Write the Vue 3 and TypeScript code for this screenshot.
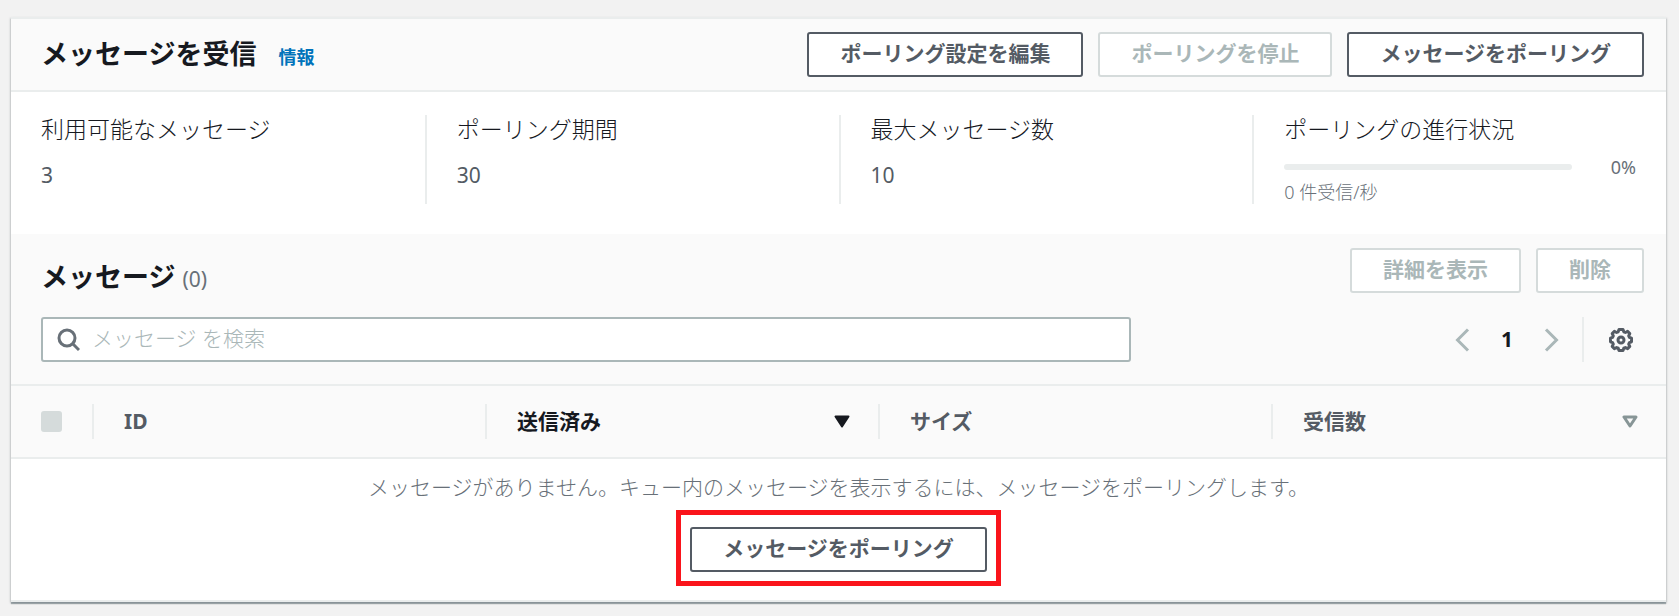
<script setup lang="ts">
import { ref } from 'vue'

interface Metric {
  label: string
  value: string
}

interface Column {
  label: string
  sort: 'none' | 'active' | 'available'
}

const metrics: Metric[] = [
  { label: '利用可能なメッセージ', value: '3' },
  { label: 'ポーリング期間', value: '30' },
  { label: '最大メッセージ数', value: '10' },
]

const columns: Column[] = [
  { label: 'ID', sort: 'none' },
  { label: '送信済み', sort: 'active' },
  { label: 'サイズ', sort: 'none' },
  { label: '受信数', sort: 'available' },
]

const progress = ref(0)
const query = ref('')
</script>

<template>
  <main class="page">
    <section class="panel">
      <header class="bar top-bar">
        <div class="heading">
          <h2>メッセージを受信</h2>
          <a class="info" href="#">情報</a>
        </div>
        <div class="actions">
          <button class="btn" type="button">ポーリング設定を編集</button>
          <button class="btn" type="button" disabled>ポーリングを停止</button>
          <button class="btn" type="button">メッセージをポーリング</button>
        </div>
      </header>

      <div class="metrics">
        <div v-for="m in metrics" :key="m.label" class="metric">
          <div class="label">{{ m.label }}</div>
          <div class="value">{{ m.value }}</div>
        </div>
        <div class="metric">
          <div id="progress-label" class="label">ポーリングの進行状況</div>
          <div class="progress">
            <div class="track" role="progressbar" aria-labelledby="progress-label" :aria-valuenow="progress">
              <div class="fill" :style="{ width: progress + '%' }"></div>
            </div>
            <span class="percent">{{ progress }}%</span>
          </div>
          <div class="rate">0 件受信/秒</div>
        </div>
      </div>

      <div class="list-head">
        <div class="bar">
          <h2>メッセージ <span class="count">(0)</span></h2>
          <div class="actions">
            <button class="btn" type="button" disabled>詳細を表示</button>
            <button class="btn" type="button" disabled>削除</button>
          </div>
        </div>
        <div class="tools">
          <label class="search">
            <svg width="24" height="24" viewBox="0 0 24 24" fill="none" stroke="#687078" stroke-width="3" aria-hidden="true">
              <circle cx="11" cy="10" r="8" />
              <path d="M16.5 15.5L23 22" />
            </svg>
            <input v-model="query" type="text" placeholder="メッセージ を検索" aria-label="メッセージ を検索" />
          </label>
          <div class="pager">
            <button class="icon-btn" type="button" disabled aria-label="前のページ">
              <svg width="24" height="24" viewBox="0 0 24 24" fill="none" stroke="#aab7b8" stroke-width="3">
                <path d="M18 1.5L7.5 12L18 22.5" />
              </svg>
            </button>
            <button class="page-no" type="button">1</button>
            <button class="icon-btn" type="button" disabled aria-label="次のページ">
              <svg width="24" height="24" viewBox="0 0 24 24" fill="none" stroke="#aab7b8" stroke-width="3">
                <path d="M6 1.5L16.5 12L6 22.5" />
              </svg>
            </button>
            <span class="rule"></span>
            <button class="icon-btn" type="button" aria-label="設定">
              <svg width="24" height="24" viewBox="0 0 24 24" fill="none" stroke="#545b64" stroke-width="3" stroke-linejoin="round">
                <path d="M10 1.5h4l.8 2.3 1.6.7 2.2-1.1 2.2 2.2-1.1 2.3.7 1.5 2.1.8v3.6l-2.1.8-.7 1.5 1.1 2.3-2.2 2.2-2.2-1.1-1.6.7-.8 2.3h-4l-.8-2.3-1.6-.7-2.2 1.1-2.2-2.2 1.1-2.3-.7-1.5-2.1-.8v-3.6l2.1-.8.7-1.5-1.1-2.3 2.2-2.2 2.2 1.1 1.6-.7z" />
                <circle cx="12" cy="12" r="3" />
              </svg>
            </button>
          </div>
        </div>
      </div>

      <table>
        <thead>
          <tr>
            <th class="select">
              <div class="cell"><input type="checkbox" disabled aria-label="すべて選択" /></div>
            </th>
            <th v-for="c in columns" :key="c.label" :class="{ sorted: c.sort === 'active' }">
              <div class="cell">
                <span>{{ c.label }}</span>
                <svg v-if="c.sort === 'active'" width="16" height="13" viewBox="0 0 16 13" aria-hidden="true">
                  <path d="M1.5 1.5h13L8 11.5z" fill="#16191f" stroke="#16191f" stroke-width="2" stroke-linejoin="round" />
                </svg>
                <svg v-if="c.sort === 'available'" width="16" height="13" viewBox="0 0 16 13" aria-hidden="true">
                  <path d="M2 2h12L8 11z" fill="none" stroke="#879596" stroke-width="3" stroke-linejoin="round" />
                </svg>
              </div>
            </th>
          </tr>
        </thead>
        <tbody>
          <tr>
            <td colspan="5">
              <div class="empty">
                <p>メッセージがありません。キュー内のメッセージを表示するには、メッセージをポーリングします。</p>
                <div class="callout">
                  <button class="btn" type="button">メッセージをポーリング</button>
                </div>
              </div>
            </td>
          </tr>
        </tbody>
      </table>
    </section>
  </main>
</template>

<style>
html {
  background: #f2f2f2;
}
</style>

<style scoped>
* {
  box-sizing: border-box;
}

.page {
  padding: 17px 13px 12px 11px;
  font-family: "Noto Sans", "Noto Sans CJK JP", sans-serif;
  font-size: 21px;
  line-height: 33px;
  color: #545b64;
}

.panel {
  background: #fff;
  border-top: 2px solid #eaeded;
  box-shadow: 0 2px 1px rgba(0, 28, 36, 0.3), 1px 1px 2px rgba(0, 28, 36, 0.15), -1px 1px 2px rgba(0, 28, 36, 0.15);
}

.bar {
  display: flex;
  align-items: flex-start;
  justify-content: space-between;
  padding: 13px 22px 13px 30px;
}

.top-bar {
  background: #fafafa;
  border-bottom: 2px solid #eaeded;
}

.heading {
  display: flex;
  align-items: baseline;
  gap: 22px;
}

h2 {
  margin: 0;
  font-size: 27px;
  line-height: 43px;
  font-weight: 700;
  color: #16191f;
}

.count {
  font-size: 21px;
  font-weight: 400;
  color: #687078;
}

.info {
  font-size: 18px;
  font-weight: 700;
  color: #0073bb;
  text-decoration: none;
}

.actions {
  display: flex;
  gap: 15px;
}

.btn {
  height: 45px;
  padding: 0 31px 2px;
  border: 2px solid #545b64;
  border-radius: 3px;
  background: #fff;
  color: #545b64;
  font: inherit;
  font-weight: 700;
  white-space: nowrap;
}

.btn:disabled {
  border-color: #d5dbdb;
  color: #aab7b8;
}

.metrics {
  display: grid;
  grid-template-columns: repeat(4, 1fr);
  padding: 23px 0 30px;
}

.metric {
  height: 89px;
  padding-left: 30px;
}

.metric + .metric {
  border-left: 2px solid #eaeded;
}

.label {
  font-size: 23px;
  line-height: 28px;
  font-weight: 300;
  color: #16191f;
}

.value {
  margin-top: 16px;
}

.progress {
  display: flex;
  align-items: center;
  justify-content: space-between;
  height: 24px;
  margin-top: 12px;
  padding-right: 30px;
}

.track {
  width: 288px;
  height: 6px;
  border-radius: 3px;
  background: #eaeded;
}

.fill {
  height: 100%;
  border-radius: 3px;
  background: #0073bb;
}

.percent,
.rate {
  font-size: 18px;
  line-height: 24px;
  color: #687078;
}

.rate {
  margin-top: 1px;
  font-weight: 300;
}

.list-head {
  background: #fafafa;
  border-bottom: 2px solid #eaeded;
}

.list-head .bar {
  padding-top: 14px;
  padding-bottom: 6px;
}

.list-head h2 {
  padding-top: 7px;
}

.tools {
  display: flex;
  justify-content: space-between;
  padding: 10px 22px 22px 30px;
}

.search {
  display: flex;
  align-items: center;
  gap: 12px;
  width: 68%;
  height: 45px;
  padding: 0 13px;
  border: 2px solid #aab7b8;
  border-radius: 3px;
  background: #fff;
}

.search input {
  flex: 1;
  min-width: 0;
  height: 41px;
  padding: 0 0 4px;
  border: 0;
  outline: 0;
  background: transparent;
  font: inherit;
  font-weight: 300;
  color: #16191f;
}

.search input::placeholder {
  color: #aab7b8;
  opacity: 1;
}

.pager {
  display: flex;
  align-items: center;
  padding-right: 11px;
}

.icon-btn {
  display: flex;
  padding: 0;
  border: 0;
  background: transparent;
}

.page-no {
  width: 66px;
  padding: 0;
  border: 0;
  background: transparent;
  font: inherit;
  font-weight: 700;
  color: #16191f;
}

.rule {
  width: 2px;
  height: 45px;
  margin: 0 25px 0 18px;
  background: #eaeded;
}

table {
  width: 100%;
  border-collapse: collapse;
  table-layout: fixed;
}

th {
  padding: 18px 0;
  border-bottom: 2px solid #eaeded;
  background: #fafafa;
  text-align: left;
  font-weight: 700;
}

th.select {
  width: 83px;
}

th.sorted {
  color: #16191f;
}

.cell {
  display: flex;
  align-items: center;
  justify-content: space-between;
  height: 35px;
  padding: 0 28px 0 30px;
  border-right: 2px solid #eaeded;
}

th:last-child .cell {
  border-right: 0;
}

.cell input {
  appearance: none;
  width: 21px;
  height: 21px;
  margin: 0;
  border-radius: 3px;
  background: #d5dbdb;
}

td {
  padding: 0;
  border-bottom: 2px solid #eaeded;
}

.empty {
  display: flex;
  flex-direction: column;
  align-items: center;
  padding: 12px 20px 14px;
}

.empty p {
  margin: 0 0 6px;
  font-weight: 300;
  color: #687078;
}

.callout {
  padding: 12px 9px 9px;
  border: 5px solid #fa141b;
}

.callout .btn {
  display: block;
}
</style>
